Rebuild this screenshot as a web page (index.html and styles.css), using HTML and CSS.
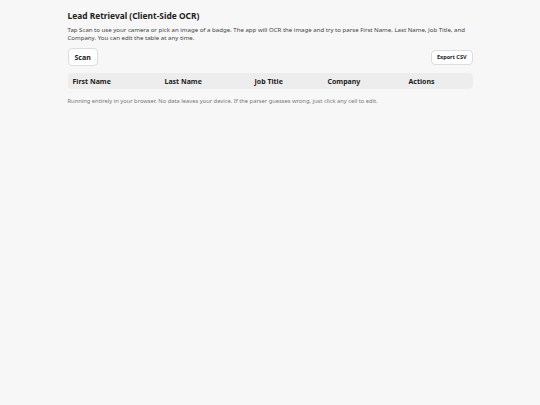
FILE: index.html
```html
<!DOCTYPE html>
<html lang="en">
<head>
  <meta charset="UTF-8">
  <meta name="viewport" content="width=device-width, initial-scale=1.0">
  <title>Lead Retrieval</title>
  <link rel="stylesheet" href="styles.css">
</head>
<body>
  <div class="app">
    <h1>Lead Retrieval (Client-Side OCR)</h1>
    <p class="intro">Tap Scan to use your camera or pick an image of a badge. The app will OCR the image and try to parse First Name, Last Name, Job Title, and Company. You can edit the table at any time.</p>

    <div class="toolbar">
      <button class="scan-btn">Scan</button>
      <button class="export-btn">Export CSV</button>
    </div>

    <table class="leads">
      <thead>
        <tr>
          <th class="col-first">First Name</th>
          <th class="col-last">Last Name</th>
          <th class="col-job">Job Title</th>
          <th class="col-company">Company</th>
          <th class="col-actions">Actions</th>
        </tr>
      </thead>
      <tbody>
      </tbody>
    </table>

    <p class="note">Running entirely in your browser. No data leaves your device. If the parser guesses wrong, just click any cell to edit.</p>
  </div>
</body>
</html>
```

FILE: styles.css
```css
body {
  margin: 0;
  background-color: #f7f7f7;
  font-family: "Noto Sans", "Open Sans", sans-serif;
  color: #222;
}

.app {
  width: 405px;
  margin: 0 auto;
  padding-top: 10px;
}

h1 {
  font-size: 8.4px;
  font-weight: 700;
  margin: 0 0 4px 0;
  line-height: 12px;
}

.intro {
  font-size: 6.08px;
  line-height: 8px;
  color: #444;
  margin: 0 0 6px 0;
}

.toolbar {
  display: flex;
  justify-content: space-between;
  align-items: center;
  margin-bottom: 7px;
}

button {
  font-family: inherit;
  background: #fff;
  border: 1px solid #ddd;
  border-radius: 4px;
  color: #222;
  font-weight: 700;
  cursor: pointer;
}

.scan-btn {
  font-size: 7px;
  height: 18px;
  padding: 0 6px;
}

.export-btn {
  font-size: 5.5px;
  height: 15px;
  padding: 0 5px;
}

.leads {
  width: 100%;
  border-collapse: separate;
  border-spacing: 0;
}

.leads th {
  background-color: #ededed;
  font-size: 7px;
  font-weight: 700;
  text-align: left;
  height: 16px;
  padding: 0 0 0 5px;
}

.leads th:first-child {
  border-radius: 4px 0 0 4px;
}

.leads th:last-child {
  border-radius: 0 4px 4px 0;
}

.col-first { width: 87px; }
.col-last { width: 85px; }
.col-job { width: 68px; }
.col-company { width: 76px; }

.note {
  font-size: 5.77px;
  color: #777;
  margin: 8px 0 0 0;
}
```
